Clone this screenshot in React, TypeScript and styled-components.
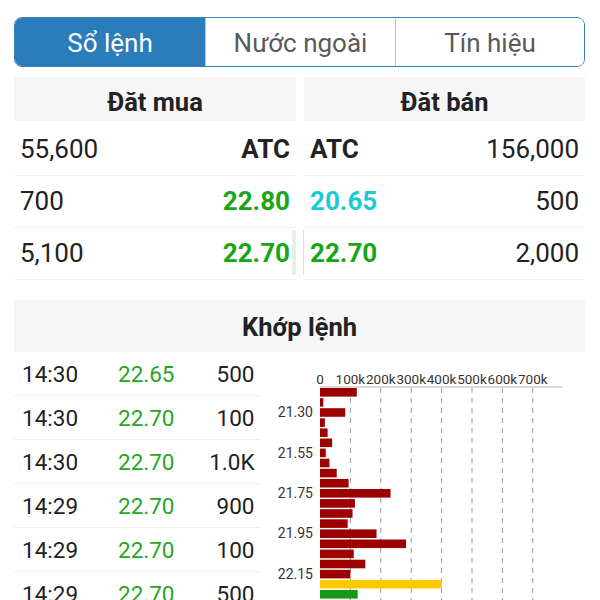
import React from "react";
import styled, { createGlobalStyle } from "styled-components";

const GlobalStyle = createGlobalStyle`
  html, body {
    margin: 0;
    padding: 0;
    background: #fff;
    font-family: Roboto, "Noto Sans", "Liberation Sans", sans-serif;
    color: #222;
  }
  * { box-sizing: border-box; }
`;

const GREEN = "#17a617";
const CYAN = "#1ec9d6";

type Tone = "plain" | "bold" | "green" | "cyan";

const tabs = ["Sổ lệnh", "Nước ngoài", "Tín hiệu"];

const buyRows: { qty: string; price: string; tone: Tone; depth: number }[] = [
  { qty: "55,600", price: "ATC", tone: "bold", depth: 0 },
  { qty: "700", price: "22.80", tone: "green", depth: 0 },
  { qty: "5,100", price: "22.70", tone: "green", depth: 4 },
];

const sellRows: { qty: string; price: string; tone: Tone; depth: number }[] = [
  { qty: "156,000", price: "ATC", tone: "bold", depth: 0 },
  { qty: "500", price: "20.65", tone: "cyan", depth: 0 },
  { qty: "2,000", price: "22.70", tone: "green", depth: 1 },
];

const matches = [
  ["14:30", "22.65", "500"],
  ["14:30", "22.70", "100"],
  ["14:30", "22.70", "1.0K"],
  ["14:29", "22.70", "900"],
  ["14:29", "22.70", "100"],
  ["14:29", "22.70", "500"],
];

// volume by price, in thousands
const volumes = [
  121, 11, 83, 16, 25, 40, 19, 31, 55, 94, 232, 115, 107, 91, 186, 283, 111,
  149, 100, 401, 124,
];
const priceLabels: Record<number, string> = {
  2: "21.30",
  6: "21.55",
  10: "21.75",
  14: "21.95",
  18: "22.15",
};

const toneColor = (t: Tone) =>
  t === "green" ? GREEN : t === "cyan" ? CYAN : "#222";

const Page = styled.div`
  width: 600px;
  height: 600px;
  overflow: hidden;
  padding: 17px 15px 0 14px;
`;

const TabBar = styled.div`
  display: grid;
  grid-template-columns: 190px 190px 1fr;
  height: 50px;
  border: 1.5px solid #3a80b8;
  border-radius: 8px;
  overflow: hidden;
`;

const Tab = styled.div<{ $active?: boolean }>`
  display: flex;
  align-items: center;
  justify-content: center;
  padding-top: 2px;
  font-size: 26px;
  background: ${(p) => (p.$active ? "#2a7cba" : "#fff")};
  color: ${(p) => (p.$active ? "#fff" : "#5a5a5a")};
  & + & {
    border-left: 1px solid #c4c4c4;
  }
`;

const Book = styled.div`
  display: grid;
  grid-template-columns: 282px 1fr;
  column-gap: 8px;
  margin-top: 10px;
`;

const Side = styled.div`
  display: flex;
  flex-direction: column;
`;

const SideHeader = styled.div`
  height: 44px;
  margin-bottom: 3px;
  padding-top: 6px;
  display: flex;
  align-items: center;
  justify-content: center;
  background: #f6f6f6;
  font-size: 25.5px;
  font-weight: 700;
  color: #222;
`;

const BookRow = styled.div<{ $reverse?: boolean }>`
  position: relative;
  height: 52px;
  display: flex;
  flex-direction: ${(p) => (p.$reverse ? "row-reverse" : "row")};
  align-items: center;
  justify-content: space-between;
  padding: 0 6px 1px;
  border-bottom: 1.5px solid #f1f1f1;
  font-size: 26px;
`;

const Depth = styled.div<{ $side: "buy" | "sell" }>`
  position: absolute;
  top: 2px;
  bottom: 4px;
  ${(p) => (p.$side === "buy" ? "right: 0;" : "left: -1px;")}
  background: ${(p) => (p.$side === "buy" ? "#e2f1e2" : "#dcdcdc")};
`;

const Qty = styled.span`
  position: relative;
  color: #222;
`;

const Price = styled.span<{ $tone: Tone }>`
  position: relative;
  font-weight: ${(p) => (p.$tone === "plain" ? 400 : 700)};
  color: ${(p) => toneColor(p.$tone)};
`;

const SectionHeader = styled.div`
  margin-top: 20px;
  height: 52px;
  padding-top: 2px;
  display: flex;
  align-items: center;
  justify-content: center;
  background: #f6f6f6;
  font-size: 25.5px;
  font-weight: 700;
  color: #222;
`;

const MatchArea = styled.div`
  display: flex;
`;

const MatchList = styled.div`
  width: 246px;
  flex-shrink: 0;
`;

const MatchRow = styled.div`
  height: 44px;
  display: grid;
  grid-template-columns: 96px 1fr 80px;
  align-items: center;
  padding: 0 7px 0 8px;
  border-bottom: 1px solid #f0f0f0;
  font-size: 22.5px;
`;

const Cell = styled.span<{ $green?: boolean; $right?: boolean }>`
  color: ${(p) => (p.$green ? "#24a624" : "#222")};
  text-align: ${(p) => (p.$right ? "right" : "left")};
`;

const ChartBox = styled.div`
  flex: 1;
`;

const X0 = 60;
const UNIT = 0.304; // px per thousand
const BAR_TOP = 36;
const PITCH = 10.1;

const VolumeChart = () => {
  const ticks = [0, 100, 200, 300, 400, 500, 600, 700];
  return (
    <svg width="326" height="248" viewBox="0 0 326 248">
      {ticks.slice(1).map((t) => (
        <line
          key={t}
          x1={X0 + t * UNIT}
          x2={X0 + t * UNIT}
          y1={36}
          y2={248}
          stroke="#9a9a9a"
          strokeWidth="1"
          strokeDasharray="5 5"
        />
      ))}
      <line x1={X0} x2={303} y1={35} y2={35} stroke="#b5b5b5" strokeWidth="1" />
      {ticks.map((t) => (
        <text
          key={t}
          x={X0 + t * UNIT}
          y={32}
          textAnchor="middle"
          fontSize="13.5"
          fontFamily="Roboto, sans-serif"
          fill="#333"
        >
          {t === 0 ? "0" : `${t}k`}
        </text>
      ))}
      {volumes.map((v, i) => {
        const color =
          i === volumes.length - 2
            ? "#ffc800"
            : i === volumes.length - 1
              ? "#169a16"
              : "#9c0000";
        const y = BAR_TOP + i * PITCH;
        return (
          <g key={i}>
            <rect x={X0} y={y} width={v * UNIT} height={8.6} fill={color} />
            {priceLabels[i] && (
              <text
                x={53}
                y={y + 9}
                textAnchor="end"
                fontSize="14"
                fontFamily="Roboto, sans-serif"
                fill="#333"
              >
                {priceLabels[i]}
              </text>
            )}
          </g>
        );
      })}
    </svg>
  );
};

const App = () => {
  return (
    <>
      <GlobalStyle />
      <Page>
        <TabBar>
          {tabs.map((t, i) => (
            <Tab key={t} $active={i === 0}>
              {t}
            </Tab>
          ))}
        </TabBar>

        <Book>
          <Side>
            <SideHeader>Đăt mua</SideHeader>
            {buyRows.map((r, i) => (
              <BookRow key={i}>
                {r.depth > 0 && <Depth $side="buy" style={{ width: r.depth }} />}
                <Qty>{r.qty}</Qty>
                <Price $tone={r.tone}>{r.price}</Price>
              </BookRow>
            ))}
          </Side>
          <Side>
            <SideHeader>Đăt bán</SideHeader>
            {sellRows.map((r, i) => (
              <BookRow key={i} $reverse>
                {r.depth > 0 && <Depth $side="sell" style={{ width: r.depth }} />}
                <Qty>{r.qty}</Qty>
                <Price $tone={r.tone}>{r.price}</Price>
              </BookRow>
            ))}
          </Side>
        </Book>

        <SectionHeader>Khớp lệnh</SectionHeader>
        <MatchArea>
          <MatchList>
            {matches.map((m, i) => (
              <MatchRow key={i}>
                <Cell>{m[0]}</Cell>
                <Cell $green>{m[1]}</Cell>
                <Cell $right>{m[2]}</Cell>
              </MatchRow>
            ))}
          </MatchList>
          <ChartBox>
            <VolumeChart />
          </ChartBox>
        </MatchArea>
      </Page>
    </>
  );
};

export default App;
